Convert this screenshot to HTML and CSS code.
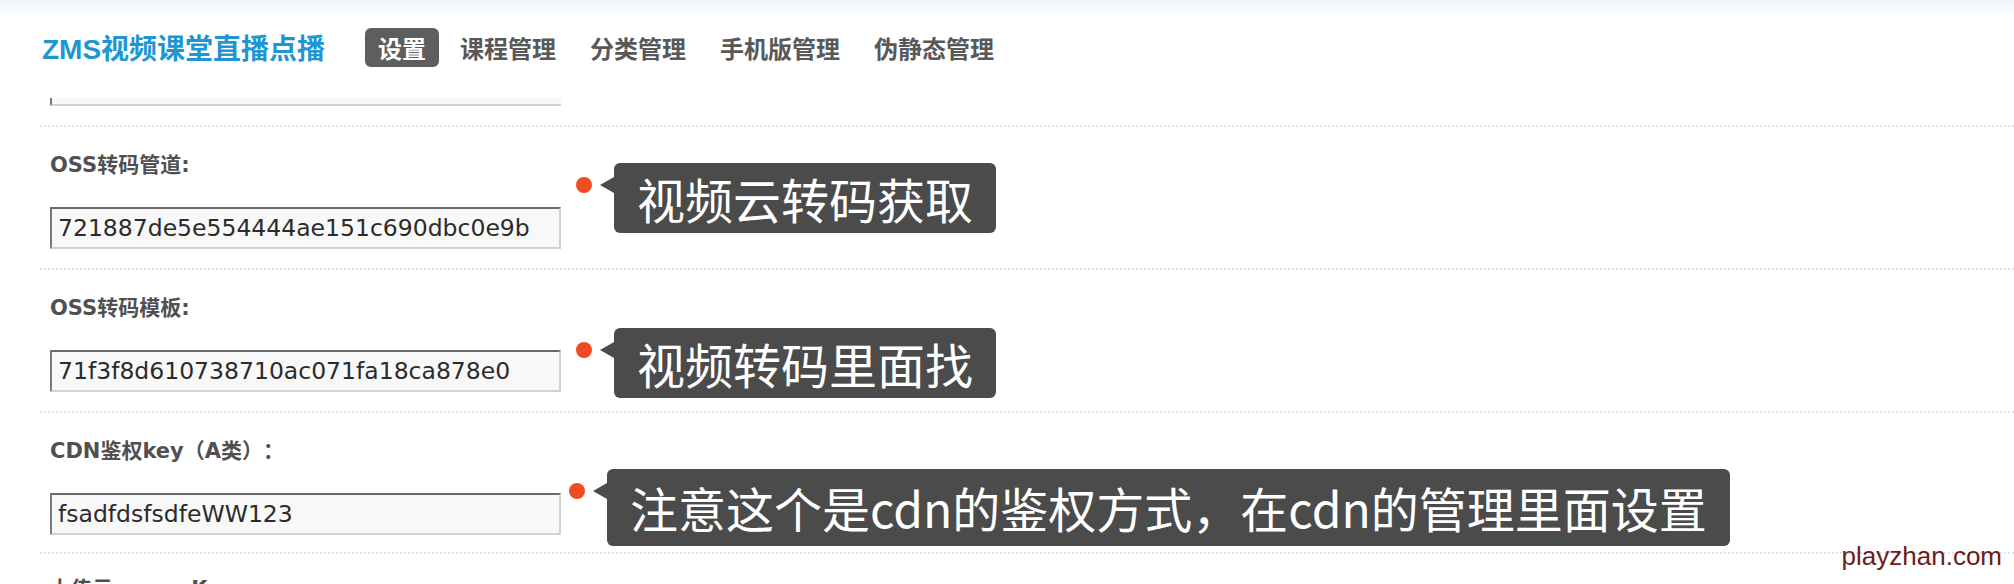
FILE: index.html
```html
<!DOCTYPE html>
<html lang="zh-CN">
<head>
  <meta charset="UTF-8">
  <meta name="viewport" content="width=device-width, initial-scale=1.0">
  <title>ZMS视频课堂直播点播 - 设置</title>
  <link rel="stylesheet" href="styles.css">
</head>
<body>
  <header class="topbar">
    <div class="brand">ZMS视频课堂直播点播</div>
    <nav class="menu">
      <a class="menu-item active" href="#">设置</a>
      <a class="menu-item" href="#">课程管理</a>
      <a class="menu-item" href="#">分类管理</a>
      <a class="menu-item" href="#">手机版管理</a>
      <a class="menu-item" href="#">伪静态管理</a>
    </nav>
  </header>

  <main class="form">
    <div class="field field-cut">
      <div class="input-stub"></div>
    </div>

    <div class="field">
      <label class="field-label">OSS转码管道:</label>
      <input class="field-input" type="text" value="721887de5e554444ae151c690dbc0e9b">
      <div class="note note-pipe">视频云转码获取</div>
    </div>

    <div class="field">
      <label class="field-label">OSS转码模板:</label>
      <input class="field-input" type="text" value="71f3f8d610738710ac071fa18ca878e0">
      <div class="note note-tpl">视频转码里面找</div>
    </div>

    <div class="field field-short">
      <label class="field-label">CDN鉴权key（A类）：</label>
      <input class="field-input" type="text" value="fsadfdsfsdfeWW123">
      <div class="note note-cdn">注意这个是cdn的鉴权方式，在cdn的管理里面设置</div>
    </div>

    <div class="field field-last">
      <label class="field-label">上传云accessKey</label>
      <input class="field-input" type="text" value="">
    </div>
  </main>

  <div class="watermark">playzhan.com</div>
</body>
</html>
```

FILE: styles.css
```css
body {
  margin: 0;
  height: 584px;
  overflow: hidden;
  position: relative;
  background: #fff;
  font-family: "Liberation Sans", "Noto Sans CJK SC", sans-serif;
  color: #555;
  text-spacing-trim: space-all;
}

.topbar {
  display: flex;
  align-items: center;
  height: 94px;
  padding-left: 42px;
  background: linear-gradient(#edf5fa 0, #fff 16px);
}
.brand {
  font-size: 28px;
  font-weight: bold;
  color: #1e96d2;
}
.menu {
  display: flex;
  margin-left: 40px;
}
.menu-item {
  display: block;
  height: 39px;
  line-height: 39px;
  padding: 0 13px;
  margin-right: 8px;
  border-radius: 6px;
  font-family: "Noto Sans CJK SC", sans-serif;
  font-size: 24px;
  font-weight: bold;
  color: #585858;
  text-decoration: none;
}
.menu-item.active {
  background: #5e5e5e;
  color: #fff;
}

.form {
  margin-left: 40px;
}
.field {
  position: relative;
  padding: 23px 0 19px 10px;
  border-bottom: 2px dotted #d3e6f2;
}
.field-cut {
  padding-top: 4px;
}
.field-short {
  padding-bottom: 17px;
}
.field-last {
  padding-top: 20px;
}
.input-stub {
  width: 509px;
  height: 6px;
  border-left: 2px solid #777;
  border-bottom: 2px solid #cfcfcf;
  background: #f8f8f8;
}
.field-label {
  display: block;
  height: 30px;
  line-height: 30px;
  font-family: "DejaVu Sans", "Noto Sans CJK SC", sans-serif;
  font-size: 21px;
  font-weight: bold;
  color: #505050;
}
.field-input {
  display: block;
  box-sizing: border-box;
  width: 511px;
  height: 42px;
  margin-top: 27px;
  padding: 0 6px;
  border: 2px solid;
  border-color: #6a6a6a #d2d2d2 #d2d2d2 #7a7a7a;
  background: #f8f8f8;
  font-family: "DejaVu Sans", sans-serif;
  font-size: 23.5px;
  color: #2b2b2b;
  outline: none;
}

/* annotation bubbles laid over the form */
.note {
  position: absolute;
  left: 574px;
  padding: 11px 23px;
  line-height: 48px;
  border-radius: 6px;
  background: #4b4b4b;
  color: #fff;
  font-family: "Noto Sans CJK SC", sans-serif;
  font-size: 48px;
  white-space: nowrap;
}
.note::before {
  content: "";
  position: absolute;
  left: -38px;
  top: 14px;
  width: 16px;
  height: 16px;
  border-radius: 50%;
  background: #f24a22;
}
.note::after {
  content: "";
  position: absolute;
  left: -14px;
  top: 14px;
  border-top: 8px solid transparent;
  border-bottom: 8px solid transparent;
  border-right: 14px solid #4b4b4b;
}
.note-pipe {
  top: 36px;
}
.note-tpl {
  top: 58px;
}
.note-cdn {
  top: 56px;
  left: 567px;
  padding-top: 14px;
  padding-bottom: 15px;
}

.watermark {
  position: absolute;
  right: 12px;
  top: 541px;
  font-family: "Liberation Sans", Arial, sans-serif;
  font-size: 26px;
  color: #6b1c1c;
}
```
